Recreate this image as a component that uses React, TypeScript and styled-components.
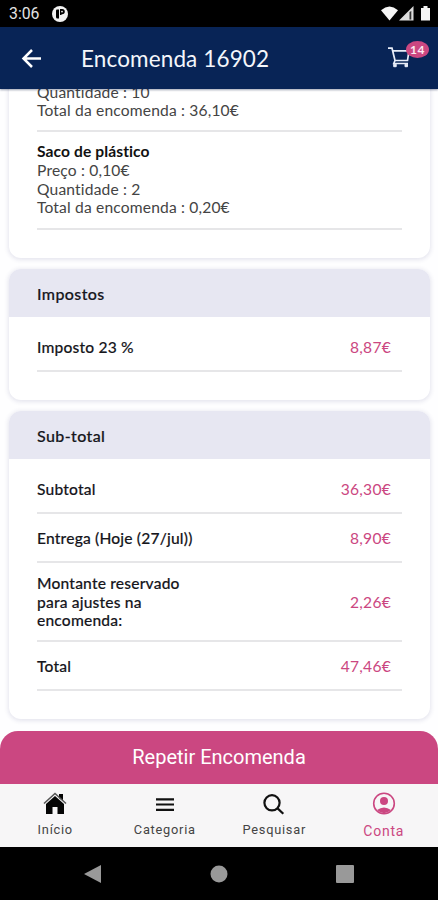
import React from "react";
import styled, { createGlobalStyle } from "styled-components";

const pink = "#cb4781";
const navy = "#082456";

const GlobalStyle = createGlobalStyle`
  * { box-sizing: border-box; }
  body { margin: 0; background: #fff; font-family: Lato, "Open Sans", sans-serif; }
  svg { display: block; flex: none; }
`;

const Screen = styled.div`
  width: 438px;
  height: 900px;
  display: flex;
  flex-direction: column;
  overflow: hidden;
  background: #fefeff;
`;

const StatusBar = styled.div`
  height: 27px;
  flex: none;
  display: flex;
  align-items: center;
  padding: 1px 7px 0 9px;
  background: #000;
  color: #e4e4e4;
  font: 400 15.8px/20px Roboto, sans-serif;
`;

const Clock = styled.span`
  width: 43px;
`;

const StatusIcons = styled.div`
  margin-left: auto;
`;

const Header = styled.header`
  height: 62px;
  flex: none;
  display: flex;
  align-items: center;
  padding: 0 9px 0 21px;
  background: ${navy};
  color: #f4f6fb;
  position: relative;
  box-shadow: 0 1px 2px rgba(8, 20, 60, 0.4);
`;

const Title = styled.h1`
  margin: 2px 0 0 39px;
  font-size: 22.5px;
  line-height: 28px;
  font-weight: 400;
  letter-spacing: 0.13px;
  white-space: nowrap;
`;

const Cart = styled.div`
  position: relative;
  width: 43px;
  height: 36px;
  margin-left: auto;
  padding: 7px 0 0 2px;
`;

const Badge = styled.span`
  position: absolute;
  right: 0;
  top: 1px;
  width: 23px;
  height: 17px;
  border-radius: 50%;
  background: ${pink};
  color: #fbe9f1;
  font-size: 12px;
  line-height: 17px;
  font-weight: 700;
  text-align: center;
  letter-spacing: 0.5px;
`;

const Content = styled.main`
  height: 642px;
  flex: none;
  overflow: hidden;
  display: flex;
  flex-direction: column;
  justify-content: flex-end;
  gap: 11px;
  padding: 0 8px 12px 9px;
`;

const Card = styled.section`
  flex: none;
  border-radius: 12px;
  background: #fff;
  box-shadow: 0 1px 4px 1px rgba(50, 50, 115, 0.12);
  overflow: hidden;
`;

const CardHeader = styled.h2`
  margin: 0;
  height: 48px;
  padding: 1px 28px 0;
  display: flex;
  align-items: center;
  background: #e7e7f2;
  color: #16161c;
  font-size: 16px;
  line-height: 19px;
  font-weight: 500;
  letter-spacing: 0.4px;
  -webkit-text-stroke: 0.2px #16161c;
`;

const List = styled.div`
  padding: 6px 28px 28px;
`;

const Row = styled.div<{ $tall?: boolean }>`
  height: ${(p) => (p.$tall ? 79 : 49)}px;
  display: flex;
  align-items: center;
  justify-content: space-between;
  padding: 1px 11px 0 0;
  border-bottom: 2px solid #e6e6e8;
`;

const Label = styled.span`
  max-width: 156px;
  color: #16161c;
  font-size: 15.6px;
  line-height: 18.7px;
  font-weight: 500;
  letter-spacing: 0.18px;
  -webkit-text-stroke: 0.15px #16161c;
`;

const Price = styled.span`
  color: ${pink};
  font-size: 15.6px;
  line-height: 18px;
  letter-spacing: 0.25px;
`;

const Item = styled.div<{ $first?: boolean }>`
  padding: 10px 0 ${(p) => (p.$first ? 10 : 11)}px;
  border-bottom: 2px solid #e6e6e8;
  color: #444;
  font-size: 15.6px;
  line-height: 18.75px;
  letter-spacing: 0.17px;
`;

const ItemName = styled.div`
  color: #111;
  font-weight: 700;
  letter-spacing: 0.1px;
`;

const RepeatButton = styled.button`
  height: 53px;
  flex: none;
  border: 0;
  padding: 0 0 2px;
  border-radius: 18px 18px 0 0;
  background: ${pink};
  color: #fff;
  font: 400 20px/24px Roboto, sans-serif;
`;

const Tabs = styled.nav`
  height: 63px;
  flex: none;
  display: grid;
  grid-template-columns: repeat(4, 1fr);
  background: #f7f6f7;
`;

const Tab = styled.div<{ $active?: boolean }>`
  display: flex;
  flex-direction: column;
  align-items: center;
  justify-content: space-between;
  padding: 8px 0 ${(p) => (p.$active ? 7 : 8)}px 1px;
  color: ${(p) => (p.$active ? pink : "#444")};
  font: 400 ${(p) => (p.$active ? 14 : 12.8)}px/18px Roboto, sans-serif;
  letter-spacing: 0.75px;
`;

const SystemNav = styled.div`
  height: 53px;
  flex: none;
  display: grid;
  grid-template-columns: 126px 126px 126px;
  justify-content: center;
  justify-items: center;
  align-items: center;
  background: #000;
`;

const totals = [
  { label: "Subtotal", price: "36,30€" },
  { label: "Entrega (Hoje (27/jul))", price: "8,90€" },
  { label: "Montante reservado para ajustes na encomenda:", price: "2,26€", tall: true },
  { label: "Total", price: "47,46€" },
];

const BackIcon = () => (
  <svg width="21" height="20" viewBox="0 0 21 20" fill="none" stroke="#fff" strokeWidth="2.5">
    <path d="M20 10.500H3M11 2 2.500 10.500l8.500 8.500" />
  </svg>
);

const CartIcon = () => (
  <svg width="23" height="22" viewBox="0 0 23 22" fill="none" stroke="#e8edf8" strokeWidth="1.7">
    <path d="M0 1.200h4l3 12.300M4.700 3.800H21l-1.500 9.700H6.500M7 13.500l-1.200 3H20" />
    <path d="M5.700 17.200h2.500v2.500H5.700zM17 17.200h2.500v2.500H17z" fill="#e8edf8" strokeWidth="1" />
  </svg>
);

const AppIcon = () => (
  <svg width="16" height="16" viewBox="0 0 16 16">
    <circle cx="8" cy="8" r="8" fill="#f2f2f2" />
    <path d="M4 4.500Q4 3.500 5 3.500h2v9H5.500Q4 12.500 4 11z" fill="#000" />
    <path d="M8 3h2.200a2.600 2.600 0 0 1 0 5.200H9.500V9H8z" fill="#000" />
    <circle cx="10" cy="5.600" r=".9" fill="#f2f2f2" />
  </svg>
);

const SignalIcons = () => (
  <svg width="50" height="16" viewBox="0 0 50 16" fill="#f5f5f5">
    <path d="M0 4.200Q8.500-3 17 4.200L8.500 14.500z" />
    <path d="M18 14.500 32.500 0v14.500z" fill="#ddd" />
    <path d="M28.500 6v7.500h1.800V5z" fill="#333" />
    <path d="M40 2h2.500V0h4v2H49v12.500h-9z" />
  </svg>
);

const HomeIcon = () => (
  <svg width="24" height="23" viewBox="0 0 24 23">
    <path d="M16 2h4v7l-4-3zM3 12 12 4l9 8V22h-6.500v-7h-5v7H3z" fill="#050505" />
    <path d="m1 11.500 11-10 11 10" fill="none" stroke="#555" strokeWidth="1.500" />
  </svg>
);

const MenuIcon = () => (
  <svg width="20" height="23" viewBox="0 0 20 23" stroke="#111" strokeWidth="2.200">
    <path d="M1 7.300h18M1 12.500h18M1 17.800h18" />
  </svg>
);

const SearchIcon = () => (
  <svg width="22" height="23" viewBox="0 0 22 23" fill="none" stroke="#111" strokeWidth="2.200">
    <circle cx="9" cy="10.800" r="7.600" />
    <path d="m14.300 16.100 6 5.700" />
  </svg>
);

const AccountIcon = () => (
  <svg width="24" height="24" viewBox="0 0 24 24">
    <circle cx="12" cy="11.500" r="10.300" fill="none" stroke={pink} strokeWidth="1.600" />
    <circle cx="12" cy="9" r="4" fill={pink} />
    <path d="M5 18q7-5 14 0-7 6.500-14 0z" fill={pink} />
  </svg>
);

export default function App() {
  return (
    <Screen>
      <GlobalStyle />
      <StatusBar>
        <Clock>3:06</Clock>
        <AppIcon />
        <StatusIcons>
          <SignalIcons />
        </StatusIcons>
      </StatusBar>
      <Header>
        <BackIcon />
        <Title>Encomenda 16902</Title>
        <Cart>
          <CartIcon />
          <Badge>14</Badge>
        </Cart>
      </Header>
      <Content>
        <Card>
          <List>
            <Item $first>
              <div>Quantidade : 10</div>
              <div>Total da encomenda : 36,10€</div>
            </Item>
            <Item>
              <ItemName>Saco de plástico</ItemName>
              <div>Preço : 0,10€</div>
              <div>Quantidade : 2</div>
              <div>Total da encomenda : 0,20€</div>
            </Item>
          </List>
        </Card>
        <Card>
          <CardHeader>Impostos</CardHeader>
          <List>
            <Row>
              <Label>Imposto 23 %</Label>
              <Price>8,87€</Price>
            </Row>
          </List>
        </Card>
        <Card>
          <CardHeader>Sub-total</CardHeader>
          <List>
            {totals.map((t) => (
              <Row key={t.label} $tall={t.tall}>
                <Label>{t.label}</Label>
                <Price>{t.price}</Price>
              </Row>
            ))}
          </List>
        </Card>
      </Content>
      <RepeatButton>Repetir Encomenda</RepeatButton>
      <Tabs>
        <Tab><HomeIcon />Início</Tab>
        <Tab><MenuIcon />Categoria</Tab>
        <Tab><SearchIcon />Pesquisar</Tab>
        <Tab $active><AccountIcon />Conta</Tab>
      </Tabs>
      <SystemNav>
        <svg width="18" height="20" viewBox="0 0 18 20"><path d="M0 10 17 1v18z" fill="#999" /></svg>
        <svg width="18" height="18" viewBox="0 0 18 18"><circle cx="9" cy="9" r="8.500" fill="#999" /></svg>
        <svg width="18" height="18" viewBox="0 0 18 18"><rect width="18" height="18" rx="1" fill="#999" /></svg>
      </SystemNav>
    </Screen>
  );
}
